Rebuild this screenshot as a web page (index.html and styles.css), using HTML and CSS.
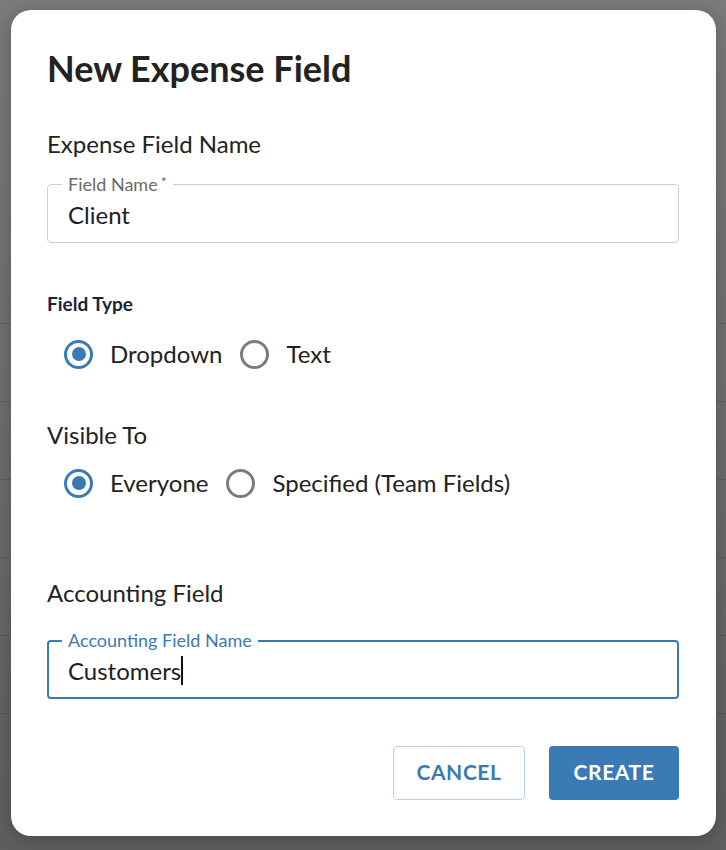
FILE: index.html
```html
<!DOCTYPE html>
<html lang="en">
<head>
<meta charset="utf-8">
<title>New Expense Field</title>
<link rel="stylesheet" href="styles.css">
</head>
<body>
<div class="backdrop">
  <div class="bg-row"></div>
  <div class="bg-row"></div>
  <div class="bg-row"></div>
  <div class="bg-row"></div>
  <div class="bg-row"></div>
  <div class="bg-row"></div>
</div>
<div class="dialog">
  <h1 class="title">New Expense Field</h1>
  <div class="section-label first">Expense Field Name</div>
  <div class="field">
    <span class="field-label">Field Name<sup class="req">*</sup></span>
    <span class="field-value">Client</span>
  </div>
  <div class="group-label">Field Type</div>
  <div class="radio-row">
    <label class="radio"><span class="radio-circle checked"></span><span class="radio-text">Dropdown</span></label>
    <label class="radio"><span class="radio-circle"></span><span class="radio-text">Text</span></label>
  </div>
  <div class="section-label visible">Visible To</div>
  <div class="radio-row second">
    <label class="radio"><span class="radio-circle checked"></span><span class="radio-text">Everyone</span></label>
    <label class="radio"><span class="radio-circle"></span><span class="radio-text">Specified (Team Fields)</span></label>
  </div>
  <div class="section-label accounting">Accounting Field</div>
  <div class="field focused">
    <span class="field-label">Accounting Field Name</span>
    <span class="field-value">Customers<span class="caret"></span></span>
  </div>
  <div class="actions">
    <button class="btn btn-outline">CANCEL</button>
    <button class="btn btn-primary">CREATE</button>
  </div>
</div>
</body>
</html>
```
FILE: styles.css
```css
html, body {
  margin: 0;
  padding: 0;
}
body {
  width: 726px;
  height: 850px;
  overflow: hidden;
  position: relative;
  background: linear-gradient(180deg, #7b7b7b 0%, #707070 45%, #5f5f5f 100%);
  font-family: Lato, "Open Sans", "Liberation Sans", sans-serif;
  color: #222;
}
.backdrop {
  padding-top: 246px;
}
.bg-row {
  height: 77px;
  border-bottom: 1px solid rgba(0, 0, 0, 0.13);
}
.dialog {
  position: absolute;
  left: 11px;
  top: 10px;
  width: 705px;
  height: 826px;
  box-sizing: border-box;
  background: #fff;
  border-radius: 20px;
  padding: 38px 37px 0 36px;
  box-shadow: 0 4px 20px rgba(0, 0, 0, 0.25);
}
.title {
  margin: 0;
  font-size: 36px;
  line-height: 40px;
  font-weight: 700;
  color: #222;
  letter-spacing: 0;
}
.section-label {
  font-size: 24px;
  line-height: 30px;
  color: #222;
}
.section-label.first { margin-top: 41px; }
.section-label.visible { margin-top: 46px; }
.section-label.accounting { margin-top: 75px; }
.field {
  position: relative;
  margin-top: 25px;
  width: 632px;
  height: 59px;
  box-sizing: border-box;
  border: 1px solid #cfcfcf;
  border-radius: 4px;
  padding: 0 20px;
  display: flex;
  align-items: center;
}
.field-label {
  position: absolute;
  top: -12px;
  left: 14px;
  padding: 0 6px;
  background: #fff;
  font-size: 18px;
  line-height: 22px;
  color: #6b6b6b;
}
.req {
  font-size: 14px;
  vertical-align: top;
  position: relative;
  top: -2px;
  margin-left: 3px;
}
.field-value {
  font-size: 24px;
  line-height: 30px;
  color: #1e1e1e;
  padding-top: 2px;
  display: flex;
  align-items: center;
}
.field.focused {
  margin-top: 32px;
  height: 59px;
  border: 2px solid #3a7ab5;
  padding: 0 19px;
}
.field.focused .field-label {
  top: -13px;
  left: 13px;
  color: #3a7ab5;
}
.caret {
  display: inline-block;
  width: 2px;
  height: 29px;
  background: #111;
  margin-left: 0;
}
.group-label {
  margin-top: 49px;
  font-size: 19px;
  line-height: 24px;
  font-weight: 700;
  color: #1b2433;
}
.radio-row {
  margin-top: 18px;
  height: 40px;
  display: flex;
  align-items: center;
  gap: 18px;
  padding-left: 17px;
}
.radio-row.second {
  margin-top: 13px;
}
.radio {
  display: flex;
  align-items: center;
  gap: 17px;
}
.radio-circle {
  width: 29px;
  height: 29px;
  box-sizing: border-box;
  border-radius: 50%;
  border: 3px solid #7c7c7c;
  display: flex;
  align-items: center;
  justify-content: center;
}
.radio-circle.checked {
  border-color: #3a7ab5;
}
.radio-circle.checked::after {
  content: "";
  width: 14px;
  height: 14px;
  border-radius: 50%;
  background: #3a7ab5;
}
.radio-text {
  font-size: 24px;
  line-height: 30px;
  color: #222;
}
.actions {
  margin-top: 47px;
  display: flex;
  justify-content: flex-end;
  gap: 24px;
  width: 632px;
}
.btn {
  font-family: Lato, "Open Sans", "Liberation Sans", sans-serif;
  font-weight: 700;
  font-size: 21px;
  letter-spacing: 0.6px;
  height: 54px;
  padding: 0 0 3px 0;
  border-radius: 4px;
  cursor: pointer;
}
.btn-outline {
  width: 132px;
  background: #fff;
  color: #3a7ab5;
  border: 1px solid #b5d0e8;
}
.btn-primary {
  width: 130px;
  background: #3a7ab5;
  color: #fff;
  border: none;
}
```
